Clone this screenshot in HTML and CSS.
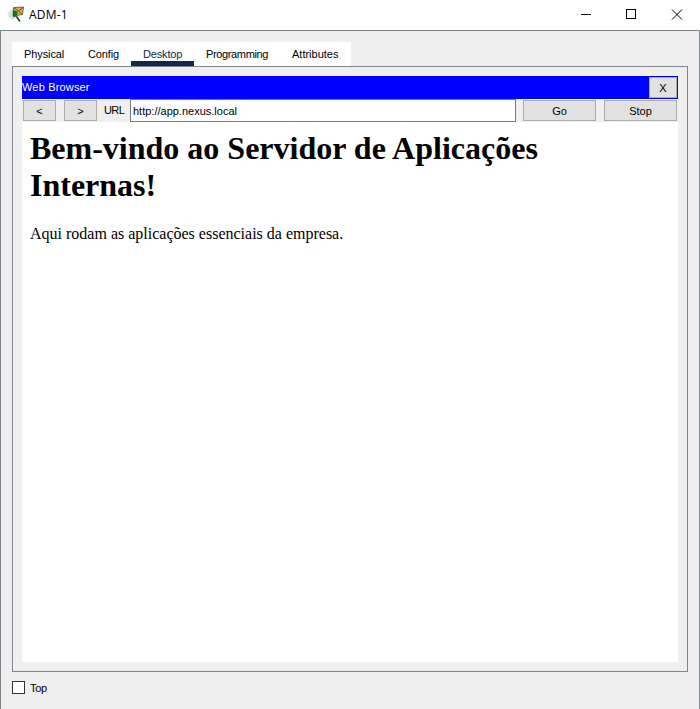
FILE: index.html
```html
<!DOCTYPE html>
<html lang="pt-BR">
<head>
<meta charset="utf-8">
<title>ADM-1</title>
<link rel="stylesheet" href="styles.css">
</head>
<body>
<div class="window">
  <header class="titlebar">
    <svg class="app-icon" width="18" height="18" viewBox="0 0 18 18">
      <ellipse cx="5" cy="8.500" rx="4.800" ry="5" fill="#dcdedb"/>
      <path d="M5.500 1.500 15.500 1 14.500 8.500 5 10z" fill="#d0ad5c" stroke="#4b3818" stroke-width=".7"/>
      <path d="M6 2 10.500 5 15 1.500M10.500 5l4 3.500" fill="none" stroke="#5b431b" stroke-width=".8"/>
      <path d="M5 4 9.500 5.500 9 10.500 5 11z" fill="#087520"/>
      <path d="m8.500 10.500 3.500 5" stroke="#303430" stroke-width="1.600"/>
    </svg>
    <span class="title">ADM-1</span>
    <svg class="controls" width="110" height="20" viewBox="0 0 110 20" fill="none" stroke="#000" shape-rendering="crispEdges">
      <path d="M1 9.500h10"/>
      <rect x="46.500" y="4.500" width="9" height="9"/>
      <path d="m92 4.500 10 10m0-10-10 10" shape-rendering="auto"/>
    </svg>
  </header>
  <main class="body">
    <nav class="tabs">
      <div class="tab physical">Physical</div>
      <div class="tab config">Config</div>
      <div class="tab desktop">Desktop</div>
      <div class="tab programming">Programming</div>
      <div class="tab attributes">Attributes</div>
    </nav>
    <section class="panel">
      <div class="browser-title"><span>Web Browser</span><div class="button close">X</div></div>
      <div class="toolbar">
        <div class="button nav">&lt;</div>
        <div class="button nav forward">&gt;</div>
        <span class="url-label">URL</span>
        <div class="url">http://app.nexus.local</div>
        <div class="button go">Go</div>
        <div class="button stop">Stop</div>
      </div>
      <article class="page">
        <h1>Bem-vindo ao Servidor de Aplicações Internas!</h1>
        <p>Aqui rodam as aplicações essenciais da empresa.</p>
      </article>
    </section>
    <div class="top-option"><span class="checkbox"></span><span class="top-label">Top</span></div>
  </main>
</div>
</body>
</html>
```
FILE: styles.css
```css
* { box-sizing: border-box; }
body { margin: 0; background: #fff; color: #000; font: 11px/14px "Liberation Sans", Arial, sans-serif; }
.window { width: 700px; height: 709px; overflow: hidden; }
.titlebar { height: 30px; display: flex; align-items: flex-start; background: #fff; }
.app-icon { margin: 6px 0 0 8px; }
.title { margin: 7px 0 0 3px; font: 12px/16px "Open Sans", "Noto Sans", sans-serif; letter-spacing: .2px; }
.controls { margin: 5px 10px 0 auto; }
.body { height: 679px; padding: 11px 11px 0; background: #efefef; border: solid #80848d; border-width: 1px 1px 0; }
.tabs { display: flex; width: 339px; height: 24px; background: #fff; }
.tab { padding: 5px 0 0 12px; white-space: nowrap; }
.physical { width: 64px; letter-spacing: -.1px; }
.config { width: 55px; letter-spacing: -.15px; }
.desktop { width: 63px; letter-spacing: -.15px; color: #10294b; border-bottom: 5px solid #10294b; }
.programming { width: 86px; letter-spacing: -.36px; }
.attributes { width: 71px; }
.panel { width: 676px; height: 606px; padding: 9px; border: 1px solid #80848d; }
.browser-title { display: flex; justify-content: space-between; height: 23px; padding: 1px 1px 1px 0; background: #00f; color: #fff; line-height: 20px; letter-spacing: .17px; }
.button { display: flex; align-items: center; justify-content: center; height: 21px; padding-top: 1px; border: 1px solid #adadad; background: #e1e1e1; color: #000; line-height: 19px; }
.close { width: 28px; }
.toolbar { display: flex; height: 23px; padding: 1px 1px 0; background: #efefef; }
.nav { width: 33px; }
.forward { margin-left: 8px; }
.url-label { width: 33px; padding: 3px 0 0 7px; letter-spacing: -.6px; }
.url { width: 386px; height: 23px; margin-top: -1px; padding: 4px 2px 0; border: 1px solid #7a7a7a; background: #fff; }
.go { width: 73px; margin-left: 7px; }
.stop { width: 73px; margin-left: 8px; }
.page { height: 540px; padding: 8px; background: #fff; font-family: "Liberation Serif", "Times New Roman", serif; }
.page h1 { width: 560px; margin: 0 0 21px; font-size: 32px; line-height: 37px; }
.page p { margin: 0; font-size: 16px; line-height: 18px; }
.top-option { display: flex; align-items: center; gap: 5px; margin-top: 9px; height: 13px; }
.top-label { letter-spacing: -.25px; }
.checkbox { width: 13px; height: 13px; border: 1px solid #333; background: #fff; }
```
